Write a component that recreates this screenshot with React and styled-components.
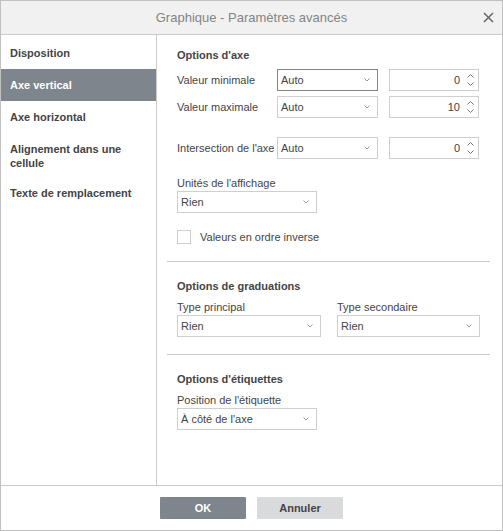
import styled, { createGlobalStyle } from "styled-components";

const GlobalStyle = createGlobalStyle`
  html, body {
    margin: 0;
    padding: 0;
    background: #fff;
  }
  * {
    box-sizing: border-box;
  }
`;

const Dialog = styled.div`
  width: 503px;
  height: 531px;
  border: 1px solid #c0c0c0;
  display: flex;
  flex-direction: column;
  font-family: "Liberation Sans", Arial, sans-serif;
  font-size: 11px;
  color: #444;
  background: #fff;
`;

const Header = styled.div`
  height: 34px;
  flex: none;
  background: #f1f1f1;
  border-bottom: 1px solid #cbcbcb;
  display: flex;
  align-items: center;
  justify-content: center;
  position: relative;
  font-size: 13px;
  color: #848484;
`;

const Close = styled.button`
  position: absolute;
  right: 7px;
  top: 9px;
  width: 14px;
  height: 14px;
  padding: 0;
  border: none;
  background: none;
  display: flex;
  align-items: center;
  justify-content: center;
`;

const Body = styled.div`
  flex: 1;
  display: flex;
  min-height: 0;
`;

const Sidebar = styled.div`
  width: 156px;
  flex: none;
  border-right: 1px solid #cbcbcb;
  padding-top: 2px;
`;

const NavItem = styled.div`
  padding: 9px 9px ${(p) => (p.$multi ? 7 : 9)}px 9px;
  line-height: 14px;
  font-weight: bold;
  color: ${(p) => (p.$active ? "#fff" : "#444")};
  background: ${(p) => (p.$active ? "#7e858c" : "transparent")};
`;

const Content = styled.div`
  flex: 1;
  padding: 13px 13px 0 10px;
`;

const Section = styled.div`
  padding: 0 10px;
`;

const Heading = styled.div`
  font-weight: bold;
  line-height: 14px;
  margin-bottom: 7px;
`;

const AxisRow = styled.div`
  display: grid;
  grid-template-columns: 100px 101px 90px;
  column-gap: 0;
  align-items: center;
  height: 22px;
  margin-top: ${(p) => p.$gap || 0}px;
`;

const Label = styled.div`
  line-height: 14px;
  white-space: nowrap;
  margin-bottom: ${(p) => p.$below || 0}px;
`;

const Combo = styled.div`
  height: 22px;
  width: ${(p) => (p.$w ? `${p.$w}px` : "100%")};
  border: 1px solid ${(p) => (p.$focus ? "#848484" : "#cfcfcf")};
  display: flex;
  align-items: center;
  padding: 0 7px 0 3px;
  color: #444;
  span {
    flex: 1;
  }
`;

const Spin = styled.div`
  height: 22px;
  width: 90px;
  margin-left: 11px;
  border: 1px solid #cfcfcf;
  display: flex;
  align-items: center;
  justify-content: flex-end;
  padding-right: 4px;
  span {
    margin-right: 7px;
  }
`;

const Arrows = styled.div`
  display: flex;
  flex-direction: column;
  gap: 4px;
`;

const Field = styled.div`
  margin-top: ${(p) => p.$top || 0}px;
`;

const CheckRow = styled.div`
  display: flex;
  align-items: center;
  margin-top: 17px;
  height: 14px;
`;

const Box = styled.div`
  width: 14px;
  height: 14px;
  border: 1px solid #cfcfcf;
  margin-right: 9px;
`;

const Divider = styled.div`
  height: 1px;
  background: #cbcbcb;
  margin: ${(p) => p.$m};
`;

const TwoCols = styled.div`
  display: grid;
  grid-template-columns: 144px 143px;
  column-gap: 16px;
`;

const Footer = styled.div`
  height: 45px;
  flex: none;
  border-top: 1px solid #cbcbcb;
  display: flex;
  align-items: center;
  justify-content: center;
  gap: 11px;
`;

const Button = styled.button`
  width: 86px;
  height: 22px;
  border: none;
  border-radius: 1px;
  font-family: "Liberation Sans", Arial, sans-serif;
  font-size: 11px;
  font-weight: bold;
  color: ${(p) => (p.$primary ? "#fff" : "#444")};
  background: ${(p) => (p.$primary ? "#7e858c" : "#d9dadc")};
`;

const Chevron = ({ up }) => (
  <svg width="7" height="4" viewBox="0 0 7 4">
    <path
      d={up ? "M0.5 3.5 L3.5 0.5 L6.5 3.5" : "M0.5 0.5 L3.5 3.5 L6.5 0.5"}
      fill="none"
      stroke="#777"
      strokeWidth="1"
    />
  </svg>
);

const SelectBox = ({ value, w, focus }) => (
  <Combo $w={w} $focus={focus}>
    <span>{value}</span>
    <svg width="6" height="4" viewBox="0 0 6 4">
      <path d="M0.5 0.5 L3 3 L5.5 0.5" fill="none" stroke="#999" strokeWidth="1" />
    </svg>
  </Combo>
);

const SpinBox = ({ value }) => (
  <Spin>
    <span>{value}</span>
    <Arrows>
      <Chevron up />
      <Chevron />
    </Arrows>
  </Spin>
);

export default function App() {
  return (
    <>
      <GlobalStyle />
      <Dialog>
        <Header>
          Graphique - Paramètres avancés
          <Close>
            <svg width="11" height="11" viewBox="0 0 11 11">
              <path d="M1 1 L10 10 M10 1 L1 10" stroke="#666" strokeWidth="1.5" />
            </svg>
          </Close>
        </Header>
        <Body>
          <Sidebar>
            <NavItem>Disposition</NavItem>
            <NavItem $active>Axe vertical</NavItem>
            <NavItem>Axe horizontal</NavItem>
            <NavItem $multi>Alignement dans une cellule</NavItem>
            <NavItem>Texte de remplacement</NavItem>
          </Sidebar>
          <Content>
            <Section>
              <Heading>Options d'axe</Heading>
              <AxisRow>
                <Label>Valeur minimale</Label>
                <SelectBox value="Auto" focus />
                <SpinBox value="0" />
              </AxisRow>
              <AxisRow $gap={5}>
                <Label>Valeur maximale</Label>
                <SelectBox value="Auto" />
                <SpinBox value="10" />
              </AxisRow>
              <AxisRow $gap={19}>
                <Label>Intersection de l'axe</Label>
                <SelectBox value="Auto" />
                <SpinBox value="0" />
              </AxisRow>
              <Field $top={17}>
                <Label $below={1}>Unités de l'affichage</Label>
                <SelectBox value="Rien" w={140} />
              </Field>
              <CheckRow>
                <Box />
                Valeurs en ordre inverse
              </CheckRow>
            </Section>
            <Divider $m="17px 0 17px 0" />
            <Section>
              <Heading>Options de graduations</Heading>
              <TwoCols>
                <Field>
                  <Label $below={1}>Type principal</Label>
                  <SelectBox value="Rien" />
                </Field>
                <Field>
                  <Label $below={1}>Type secondaire</Label>
                  <SelectBox value="Rien" />
                </Field>
              </TwoCols>
            </Section>
            <Divider $m="17px 0 17px 0" />
            <Section>
              <Heading>Options d'étiquettes</Heading>
              <Field>
                <Label $below={1}>Position de l'étiquette</Label>
                <SelectBox value="À côté de l'axe" w={140} />
              </Field>
            </Section>
          </Content>
        </Body>
        <Footer>
          <Button $primary>OK</Button>
          <Button>Annuler</Button>
        </Footer>
      </Dialog>
    </>
  );
}
